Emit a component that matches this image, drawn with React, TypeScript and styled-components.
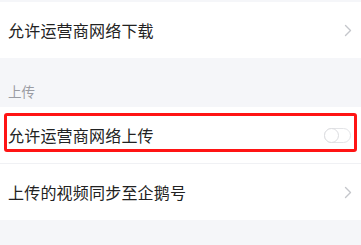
import styled, { createGlobalStyle } from 'styled-components';

const GlobalStyle = createGlobalStyle`
  html, body {
    margin: 0;
    padding: 0;
    background: #f5f6f9;
  }
  body {
    font-family: "Noto Sans CJK SC", "Noto Sans", sans-serif;
  }
`;

const Page = styled.div`
  width: 361px;
  height: 245px;
  overflow: hidden;
  background: #f5f6f9;
  padding-top: 2px;
  box-sizing: border-box;
  display: flex;
  flex-direction: column;
`;

const Row = styled.div<{ $divider?: boolean }>`
  position: relative;
  height: 56px;
  flex-shrink: 0;
  display: flex;
  align-items: center;
  justify-content: space-between;
  padding: 0 9px 0 8px;
  background: #ffffff;
  border-bottom: ${(p) => (p.$divider ? '1px solid #f0f1f4' : 'none')};
`;

const Label = styled.span`
  font-size: 16px;
  letter-spacing: 0.2px;
  color: #222222;
  line-height: 20px;
`;

const SectionTitle = styled.div`
  height: 49px;
  display: flex;
  align-items: flex-end;
  padding: 0 8px 6px;
  box-sizing: border-box;
  font-size: 13.5px;
  color: #9a9ca3;
`;

const Toggle = styled.div`
  position: relative;
  width: 27px;
  height: 15px;
  border-radius: 8px;
  border: 1px solid #e3e4e7;
  background: #fff;
  box-sizing: border-box;
  margin-right: 1px;
`;

const Knob = styled.div`
  position: absolute;
  left: -1px;
  top: -1px;
  width: 15px;
  height: 15px;
  border-radius: 50%;
  border: 1px solid #dcdde0;
  box-sizing: border-box;
  background: #fff;
`;

const Highlight = styled.div`
  position: absolute;
  left: 4px;
  right: 4px;
  top: 6px;
  bottom: 11px;
  border: 3px solid #ff1414;
  border-radius: 3px;
  pointer-events: none;
`;

const Chevron = () => (
  <svg width="8" height="13" viewBox="0 0 8 13">
    <path d="M1.5 1.5 L6.5 6.5 L1.5 11.5" fill="none" stroke="#c4c6cb" strokeWidth="1.4" strokeLinecap="round" strokeLinejoin="round" />
  </svg>
);

export default function App() {
  return (
    <>
      <GlobalStyle />
      <Page>
        <Row>
          <Label>允许运营商网络下载</Label>
          <Chevron />
        </Row>
        <SectionTitle>上传</SectionTitle>
        <Row $divider>
          <Label>允许运营商网络上传</Label>
          <Toggle>
            <Knob />
          </Toggle>
          <Highlight />
        </Row>
        <Row>
          <Label>上传的视频同步至企鹅号</Label>
          <Chevron />
        </Row>
      </Page>
    </>
  );
}
